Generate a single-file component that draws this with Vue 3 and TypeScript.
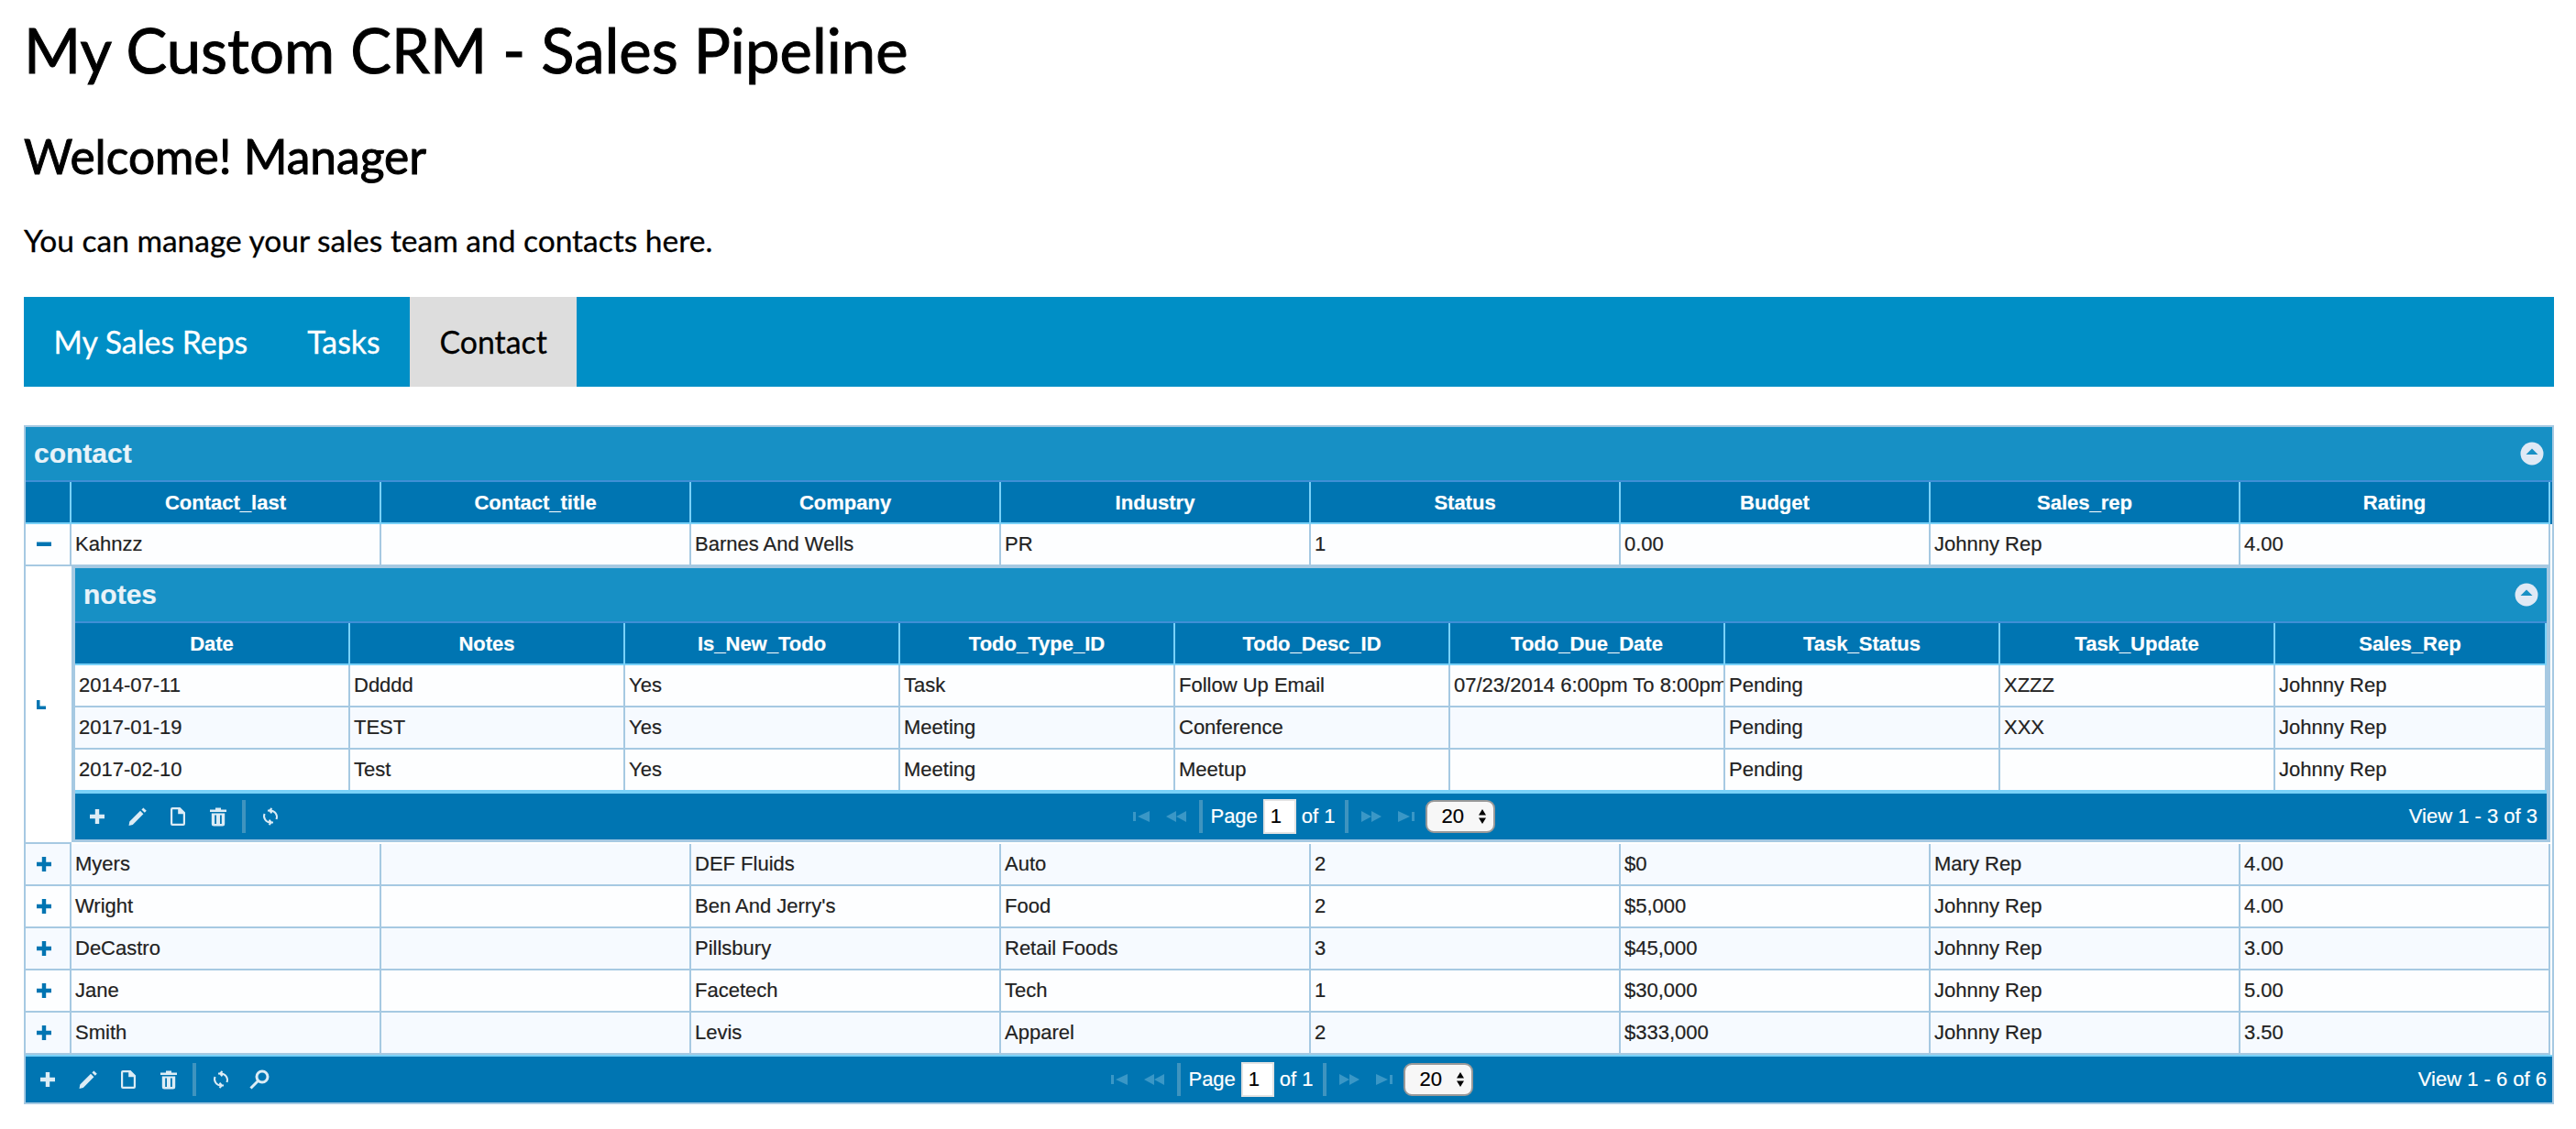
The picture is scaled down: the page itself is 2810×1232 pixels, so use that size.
<script setup lang="ts">
import { computed } from 'vue'

interface Grid {
  title: string
  columns: string[]
  rows: string[][]
}

const fill: Record<string, string> = {
  plus: 'M9.8 4h4.4v5.8H20v4.4h-5.8V20H9.8v-5.8H4V9.8h5.8z',
  pencil: 'M2.5 22l.8-4.500L15 5.800l3.400 3.400L6.800 21zM16.400 4.400l2-2 3.400 3.400-2 2z',
  doc: 'M6 2h8.5L20 7.5V20a2 2 0 0 1-2 2H6a2 2 0 0 1-2-2V4a2 2 0 0 1 2-2zM6.2 4.2v15.6h11.6V9.2h-5.6v-5z',
  trash: 'M9 2.5h6v2h6v2.4H3V4.500h6zM4.800 8.500h14.400V20a2.500 2.500 0 0 1-2.500 2.500H7.300A2.500 2.500 0 0 1 4.800 20zM8.200 10.500v9.500h1.800v-9.500zM14 10.500v9.500h1.800v-9.500z',
}

const stroke: Record<string, string> = {
  refresh: 'M12 5.500a7 7 0 0 1 6.500 9.500M15 18.500l-3-.2M12 18.500a7 7 0 0 1-6.500-9.500M9 5.500l3 .2M13.500 3l-2.500 2.600 2.500 2.600M10.500 21l2.500-2.600-2.500-2.600',
  search: 'M15 3a6 6 0 1 1 0 12 6 6 0 0 1 0-12zM10.500 13.500 2.500 21.500',
}

const mainGrid: Grid = {
  title: 'contact',
  columns: ['Contact_last', 'Contact_title', 'Company', 'Industry', 'Status', 'Budget', 'Sales_rep', 'Rating'],
  rows: [
    ['Myers', '', 'DEF Fluids', 'Auto', '2', '$0', 'Mary Rep', '4.00'],
    ['Wright', '', "Ben And Jerry's", 'Food', '2', '$5,000', 'Johnny Rep', '4.00'],
    ['DeCastro', '', 'Pillsbury', 'Retail Foods', '3', '$45,000', 'Johnny Rep', '3.00'],
    ['Jane', '', 'Facetech', 'Tech', '1', '$30,000', 'Johnny Rep', '5.00'],
    ['Smith', '', 'Levis', 'Apparel', '2', '$333,000', 'Johnny Rep', '3.50'],
  ],
}

const firstRow = ['Kahnzz', '', 'Barnes And Wells', 'PR', '1', '0.00', 'Johnny Rep', '4.00']

const notes: Grid = {
  title: 'notes',
  columns: ['Date', 'Notes', 'Is_New_Todo', 'Todo_Type_ID', 'Todo_Desc_ID', 'Todo_Due_Date', 'Task_Status', 'Task_Update', 'Sales_Rep'],
  rows: [
    ['2014-07-11', 'Ddddd', 'Yes', 'Task', 'Follow Up Email', '07/23/2014 6:00pm To 8:00pm', 'Pending', 'XZZZ', 'Johnny Rep'],
    ['2017-01-19', 'TEST', 'Yes', 'Meeting', 'Conference', '', 'Pending', 'XXX', 'Johnny Rep'],
    ['2017-02-10', 'Test', 'Yes', 'Meeting', 'Meetup', '', 'Pending', '', 'Johnny Rep'],
  ],
}

const tabs = ['My Sales Reps', 'Tasks', 'Contact']
const activeTab = computed(() => 'Contact')
const pagerFill = ['plus', 'pencil', 'doc', 'trash']
</script>

<template>
  <div class="page">
    <h1>My Custom CRM - Sales Pipeline</h1>
    <h2>Welcome! Manager</h2>
    <p class="lead">You can manage your sales team and contacts here.</p>

    <nav class="tabs">
      <a v-for="tab in tabs" :key="tab" class="tab" :class="{ 'is-active': tab === activeTab }">{{ tab }}</a>
    </nav>

    <div class="grid">
      <div class="caption">
        <span>{{ mainGrid.title }}</span>
        <svg class="collapse" viewBox="0 0 26 26"><circle cx="13" cy="13" r="12.500" fill="#dfe9f5" /><path d="M13 7.500 19.500 14h-13z" fill="#1790c5" /></svg>
      </div>
      <div class="head">
        <table class="main-table">
          <colgroup><col class="col-toggle" /><col v-for="c in mainGrid.columns" :key="c" class="col-main" /></colgroup>
          <tr>
            <th></th>
            <th v-for="c in mainGrid.columns" :key="c">{{ c }}</th>
          </tr>
        </table>
      </div>
      <table class="main-table body">
        <colgroup><col class="col-toggle" /><col v-for="c in mainGrid.columns" :key="c" class="col-main" /></colgroup>
        <tr>
          <td class="toggle"><svg class="row-icon" viewBox="0 0 24 24"><path d="M4 9.500h16v4.500H4z" /></svg></td>
          <td v-for="(v, i) in firstRow" :key="i">{{ v }}</td>
        </tr>
        <tr>
          <td class="sub-toggle"><svg class="corner" viewBox="0 0 10 10"><path d="M0 0h3.500v6.500H10V10H0z" /></svg></td>
          <td class="sub-cell" colspan="8">
            <div class="grid grid--sub">
              <div class="caption caption--sub">
                <span>{{ notes.title }}</span>
                <svg class="collapse" viewBox="0 0 26 26"><circle cx="13" cy="13" r="12.500" fill="#dfe9f5" /><path d="M13 7.500 19.500 14h-13z" fill="#1790c5" /></svg>
              </div>
              <div class="head">
                <table class="sub-table">
                  <colgroup><col v-for="(c, i) in notes.columns" :key="c" :class="i === 8 ? 'col-sub-last' : 'col-sub'" /></colgroup>
                  <tr><th v-for="c in notes.columns" :key="c">{{ c }}</th></tr>
                </table>
              </div>
              <table class="sub-table body">
                <colgroup><col v-for="(c, i) in notes.columns" :key="c" :class="i === 8 ? 'col-sub-last' : 'col-sub'" /></colgroup>
                <tr v-for="(row, r) in notes.rows" :key="r" :class="{ alt: r === 1 }">
                  <td v-for="(v, i) in row" :key="i">{{ v }}</td>
                </tr>
              </table>
              <div class="pager pager--sub">
                <div class="pager-left">
                  <svg v-for="n in pagerFill" :key="n" class="tool" viewBox="0 0 24 24"><path :d="fill[n]" fill-rule="evenodd" /></svg>
                  <i class="sep"></i>
                  <svg class="tool tool--line" viewBox="0 0 24 24"><path :d="stroke.refresh" /></svg>
                </div>
                <div class="pager-mid">
                  <svg class="nav" viewBox="0 0 18 12"><path d="M0 1h3v10H0zM18 0v12L5 6z" /></svg>
                  <svg class="nav nav--wide" viewBox="0 0 22 12"><path d="M11 0v12L0 6zM22 0v12L11 6z" /></svg>
                  <i class="sep sep--mid"></i>
                  <span class="page-label">Page</span>
                  <input class="page-input" type="text" value="1" />
                  <span class="page-of">of 1</span>
                  <i class="sep sep--mid"></i>
                  <svg class="nav nav--wide nav--next" viewBox="0 0 22 12"><path d="M0 0v12L11 6zM11 0v12L22 6z" /></svg>
                  <svg class="nav nav--last" viewBox="0 0 18 12"><path d="M0 0v12L13 6zM15 1h3v10h-3z" /></svg>
                  <div class="size">
                    <span>20</span>
                    <svg viewBox="0 0 8 16"><path d="M4 0l4 6.500H0zM4 16 0 9.500h8z" /></svg>
                  </div>
                </div>
                <div class="pager-right">View 1 - 3 of 3</div>
              </div>
            </div>
          </td>
        </tr>
        <tr v-for="(row, r) in mainGrid.rows" :key="r" :class="{ alt: r % 2 === 0 }">
          <td class="toggle"><svg class="row-icon" viewBox="0 0 24 24"><path :d="fill.plus" /></svg></td>
          <td v-for="(v, i) in row" :key="i">{{ v }}</td>
        </tr>
      </table>
      <div class="pager">
        <div class="pager-left">
          <svg v-for="n in pagerFill" :key="n" class="tool" viewBox="0 0 24 24"><path :d="fill[n]" fill-rule="evenodd" /></svg>
          <i class="sep"></i>
          <svg class="tool tool--line" viewBox="0 0 24 24"><path :d="stroke.refresh" /></svg>
          <svg class="tool tool--line tool--search" viewBox="0 0 24 24"><path :d="stroke.search" /></svg>
        </div>
        <div class="pager-mid">
          <svg class="nav" viewBox="0 0 18 12"><path d="M0 1h3v10H0zM18 0v12L5 6z" /></svg>
          <svg class="nav nav--wide" viewBox="0 0 22 12"><path d="M11 0v12L0 6zM22 0v12L11 6z" /></svg>
          <i class="sep sep--mid"></i>
          <span class="page-label">Page</span>
          <input class="page-input" type="text" value="1" />
          <span class="page-of">of 1</span>
          <i class="sep sep--mid"></i>
          <svg class="nav nav--wide nav--next" viewBox="0 0 22 12"><path d="M0 0v12L11 6zM11 0v12L22 6z" /></svg>
          <svg class="nav nav--last" viewBox="0 0 18 12"><path d="M0 0v12L13 6zM15 1h3v10h-3z" /></svg>
          <div class="size">
            <span>20</span>
            <svg viewBox="0 0 8 16"><path d="M4 0l4 6.500H0zM4 16 0 9.500h8z" /></svg>
          </div>
        </div>
        <div class="pager-right">View 1 - 6 of 6</div>
      </div>
    </div>
  </div>
</template>

<style>
body {
  margin: 0;
  background: #fff;
}
</style>

<style scoped>
* {
  box-sizing: border-box;
}

.page {
  padding: 0 24px 0 26px;
  font-family: Lato, 'Liberation Sans', sans-serif;
  color: #000;
}

h1 {
  margin: 0;
  padding-top: 12px;
  font-size: 67px;
  font-weight: 400;
  line-height: 84px;
  -webkit-text-stroke: 1px #000;
}

h2 {
  margin: 44px 0 0;
  font-size: 51.500px;
  font-weight: 400;
  line-height: 60px;
  -webkit-text-stroke: 1px #000;
}

.lead {
  margin: 40px 0 0;
  font-size: 33.500px;
  line-height: 44px;
  -webkit-text-stroke: 0.3px #000;
}

.tabs {
  display: flex;
  height: 98px;
  margin-top: 40px;
  background: #008fc6;
}

.tab {
  display: flex;
  align-items: center;
  padding: 0 32.500px;
  font-size: 33.800px;
  color: #fff;
  -webkit-text-stroke: 0.3px currentColor;
}

.tab.is-active {
  background: #ddd;
  color: #000;
}

.grid {
  margin-top: 42px;
  border: 2px solid #a6c9e2;
  background: #fff;
  font-family: 'Liberation Sans', Arial, sans-serif;
  font-size: 22px;
  color: #222;
  -webkit-text-stroke: 0.2px currentColor;
}

.caption {
  display: flex;
  align-items: center;
  justify-content: space-between;
  height: 60px;
  padding: 0 9px;
  border-bottom: 2px solid #3f8fd6;
  background: #1790c5;
  font-size: 30px;
  font-weight: 700;
  color: #e9f3f9;
}

.collapse {
  width: 26px;
  height: 26px;
}

.head {
  background: #0075b2;
}

table {
  table-layout: fixed;
  border-collapse: separate;
  border-spacing: 0;
}

.main-table {
  width: 2754px;
}

.col-toggle {
  width: 50px;
}

.col-main {
  width: 338px;
}

th {
  height: 46px;
  padding: 2px 4px 0;
  border-right: 2px solid #79d1f8;
  border-bottom: 2px solid #79d1f8;
  background: #0075b2;
  font-weight: 700;
  color: #fff;
  text-align: center;
  white-space: nowrap;
}

.body td {
  height: 46px;
  padding: 0 4px;
  border-right: 2px solid #a6c9e2;
  border-bottom: 2px solid #a6c9e2;
  background: #fdfeff;
  white-space: nowrap;
  overflow: hidden;
}

.body .alt td {
  background: #f6faff;
}

.body td.toggle {
  padding: 0;
  text-align: center;
}

.row-icon {
  display: block;
  width: 24px;
  height: 24px;
  margin: 0 auto 0 8px;
  fill: #0075b2;
}

.body td.sub-toggle {
  padding: 0;
  border-right: 0;
  vertical-align: middle;
  background: #fff;
}

.corner {
  display: block;
  width: 10px;
  height: 10px;
  margin: 0 0 0 12px;
  fill: #0075b2;
}

.body td.sub-cell {
  padding: 0;
  height: 303px;
  background: #fff;
  border-bottom: 0;
  border-right: 0;
  vertical-align: top;
}

.grid--sub {
  width: 2704px;
  margin: 0;
  border-width: 2px 4px 3px;
}

.sub-table {
  width: 2696px;
}

.col-sub {
  width: 300px;
}

.col-sub-last {
  width: 296px;
}

.grid--sub .body tr:last-child td {
  border-bottom: 0;
  height: 44px;
}

.pager {
  display: grid;
  grid-template-columns: 1fr auto 1fr;
  align-items: center;
  height: 52px;
  border-top: 2px solid #79d1f8;
  background: #0075b2;
  color: #fff;
}

.pager--sub {
  height: 54px;
  border-top-width: 4px;
}

.pager-left {
  display: flex;
  align-items: center;
  padding-left: 12px;
}

.pager-mid {
  display: flex;
  align-items: center;
  margin-left: 7px;
}

.pager-right {
  padding-right: 6px;
  text-align: right;
}

.pager--sub .pager-right {
  padding-right: 10px;
}

.tool {
  width: 24px;
  height: 24px;
  margin-right: 20px;
  fill: #dcecf5;
}

.tool--line {
  fill: none;
  stroke: #dcecf5;
  stroke-width: 2;
  margin-left: -3px;
}

.tool--search {
  stroke-width: 3;
  margin-left: -2px;
}

.sep {
  display: block;
  width: 4px;
  height: 36px;
  margin: 0 18px 0 -6px;
  background: #3f94bf;
}

.sep--mid {
  margin: 0;
}

.nav {
  width: 18px;
  height: 12px;
  margin: 0 18px 0 0;
  fill: #3a97c6;
}

.nav--wide {
  width: 22px;
  margin-right: 14px;
}

.nav--next {
  margin-left: 14px;
  margin-right: 18px;
}

.nav--last {
  margin-right: 0;
}

.page-label {
  margin-left: 8px;
}

.page-input {
  width: 36px;
  height: 38px;
  margin: 0 6px 0 6px;
  padding: 0 0 0 6px;
  border: 2px solid #e3e3e3;
  background: #fff;
  font: 22px 'Liberation Sans', Arial, sans-serif;
  color: #000;
}

.page-of {
  margin-right: 10px;
}

.size {
  display: flex;
  align-items: center;
  justify-content: space-between;
  width: 76px;
  height: 36px;
  margin-left: 12px;
  padding: 0 8px 0 16px;
  border: 2px solid #999;
  border-radius: 9px;
  background: #f7f7f7;
  color: #000;
}

.size svg {
  width: 8px;
  height: 16px;
}
</style>
